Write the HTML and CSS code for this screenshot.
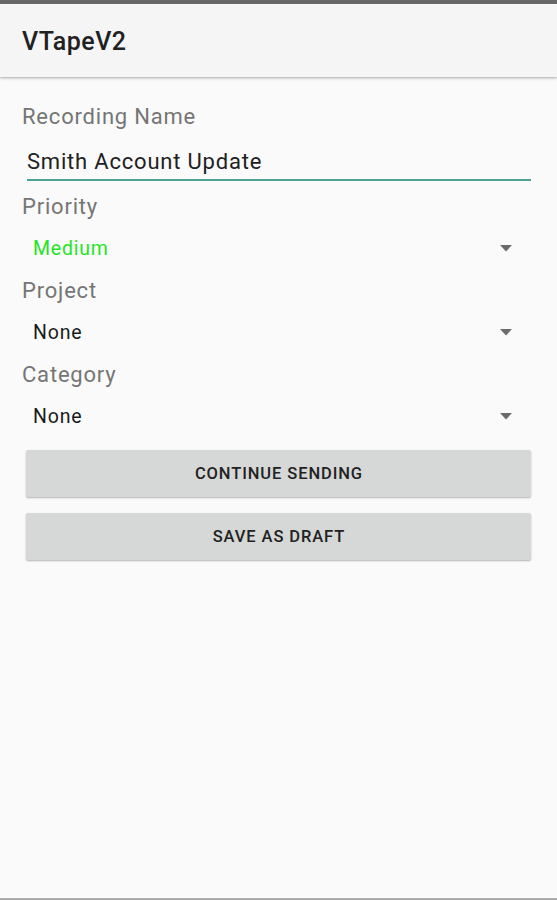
FILE: index.html
```html
<!DOCTYPE html>
<html>
<head>
<meta charset="utf-8">
<link rel="stylesheet" href="styles.css">
</head>
<body>
<div class="screen">
  <div class="statusline"></div>
  <header class="toolbar"><h1 class="title">VTapeV2</h1></header>
  <main class="form">
    <div class="label">Recording Name</div>
    <div class="input">Smith Account Update</div>
    <div class="label">Priority</div>
    <div class="spinner"><span class="value green">Medium</span><svg class="arrow" width="12" height="7" viewBox="0 0 12 7"><polygon points="0,0 12,0 6,6.5" fill="#6b6b6b"/></svg></div>
    <div class="label">Project</div>
    <div class="spinner"><span class="value">None</span><svg class="arrow" width="12" height="7" viewBox="0 0 12 7"><polygon points="0,0 12,0 6,6.5" fill="#6b6b6b"/></svg></div>
    <div class="label">Category</div>
    <div class="spinner"><span class="value">None</span><svg class="arrow" width="12" height="7" viewBox="0 0 12 7"><polygon points="0,0 12,0 6,6.5" fill="#6b6b6b"/></svg></div>
    <div class="buttons">
      <button class="btn">CONTINUE SENDING</button>
      <button class="btn">SAVE AS DRAFT</button>
    </div>
  </main>
  <div class="bottomline"></div>
</div>
</body>
</html>
```
FILE: styles.css
```css
html, body {
  margin: 0;
  padding: 0;
  background: #fafafa;
}
body {
  font-family: Roboto, "Liberation Sans", sans-serif;
}
.screen {
  height: 900px;
  display: flex;
  flex-direction: column;
  background: #fafafa;
}
.statusline {
  height: 4px;
  background: #676767;
  border-bottom: 1px solid #ffffff;
}
.toolbar {
  height: 72px;
  background: #f5f5f5;
  display: flex;
  align-items: center;
  padding: 0 22px;
  box-shadow: 0 1px 2px rgba(0,0,0,0.25), 0 2px 4px rgba(0,0,0,0.08);
  position: relative;
  z-index: 1;
}
.title {
  margin: 0;
  font-size: 25px;
  font-weight: 500;
  color: #212121;
  line-height: 28px;
  letter-spacing: 0.5px;
  padding-top: 1px;
}
.form {
  flex: 1;
  padding: 18.7px 22px 0 22px;
  display: flex;
  flex-direction: column;
}
.label {
  height: 42px;
  font-size: 22px;
  line-height: 42px;
  color: #757575;
  letter-spacing: 0.8px;
}
.input {
  margin: 0 4px 0 5px;
  padding-top: 11.5px;
  height: 29.8px;
  font-size: 22px;
  line-height: 25px;
  color: #212121;
  letter-spacing: 0.8px;
  border-bottom: 2px solid #4fa396;
  margin-bottom: 4.7px;
}
.spinner {
  height: 42px;
  display: flex;
  align-items: center;
  justify-content: space-between;
  padding: 0 23px 0 11px;
}
.value {
  font-size: 19.5px;
  line-height: 42px;
  color: #1a1a1a;
  letter-spacing: 0.8px;
  padding-top: 1px;
}
.value.green {
  color: #24e524;
}
.arrow {
  display: block;
}
.buttons {
  margin: 12px 4px 0 4px;
  display: flex;
  flex-direction: column;
  gap: 16px;
}
.btn {
  height: 47px;
  border: none;
  border-radius: 2px;
  background: #d6d7d7;
  box-shadow: 0 1px 1.5px rgba(0,0,0,0.22), 0 1px 3px rgba(0,0,0,0.08);
  font-family: Roboto, "Liberation Sans", sans-serif;
  font-size: 16.5px;
  font-weight: 500;
  color: #222222;
  letter-spacing: 0.9px;
  padding: 1px 0 0 0.9px;
}
.bottomline {
  height: 2px;
  background: #ababab;
  border-top: 1px solid #ffffff;
}
```
